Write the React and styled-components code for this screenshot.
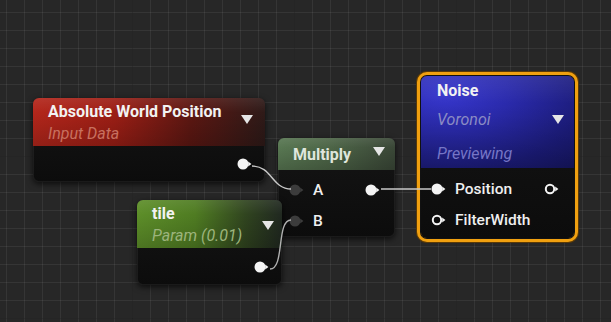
import styled, { createGlobalStyle } from 'styled-components';

const GlobalStyle = createGlobalStyle`
  html, body {
    margin: 0;
    padding: 0;
    background: #252525;
    overflow: hidden;
  }
`;

const Canvas = styled.div`
  position: relative;
  width: 611px;
  height: 322px;
  overflow: hidden;
  font-family: Roboto, 'Liberation Sans', sans-serif;
  background-color: #272727;
  background-image:
    linear-gradient(90deg, rgba(0, 0, 0, 0.3) 1px, transparent 1px),
    linear-gradient(0deg, rgba(0, 0, 0, 0.3) 1px, transparent 1px),
    linear-gradient(90deg, rgba(255, 255, 255, 0.065) 1px, transparent 1px),
    linear-gradient(0deg, rgba(255, 255, 255, 0.065) 1px, transparent 1px);
  background-size: 162px 162px, 162px 162px, 18px 18px, 18px 18px;
  background-position: 132px 0, 0 319px, 6px 0, 0 13px;
`;

const Node = styled.div`
  position: absolute;
  left: ${(p) => p.$left}px;
  top: ${(p) => p.$top}px;
  width: ${(p) => p.$width}px;
  height: ${(p) => p.$height}px;
  display: flex;
  flex-direction: column;
  border-radius: 6px;
  overflow: hidden;
  background: linear-gradient(180deg, #151515 0%, #0c0c0c 100%);
  box-shadow: ${(p) =>
    p.$selected
      ? '0 0 0 1px #111, 0 0 0 4px #f0a010, 0 0 0 5px #5a3a08'
      : '0 2px 6px rgba(0, 0, 0, 0.7), inset 0 0 0 1px rgba(255, 255, 255, 0.06)'};
`;

const headerBg = {
  red: 'linear-gradient(90deg, #b3261b 0%, #9c1e15 35%, #5c1712 68%, #2e1a18 100%)',
  sage: 'linear-gradient(90deg, #587752 0%, #4d6547 45%, #3a4737 100%)',
  green: 'linear-gradient(90deg, #5d8e29 0%, #4f7c22 40%, #30441f 75%, #202820 100%)',
  blue: 'radial-gradient(ellipse at 15% 20%, #3636cc 0%, #2a2aac 35%, #1c1c7c 75%, #161662 100%)',
};

const Header = styled.div`
  position: relative;
  height: ${(p) => p.$height}px;
  flex: none;
  display: flex;
  align-items: flex-start;
  justify-content: space-between;
  padding: ${(p) => p.$pad};
  box-sizing: border-box;
  background: ${(p) => headerBg[p.$tone]};
  &::after {
    content: '';
    position: absolute;
    inset: 0;
    background: linear-gradient(180deg, rgba(255, 255, 255, 0.08) 0%, transparent 30%, rgba(0, 0, 0, 0.18) 100%);
    pointer-events: none;
  }
`;

const TextCol = styled.div`
  display: flex;
  flex-direction: column;
  flex: 1;
  position: relative;
  z-index: 1;
`;

const HeadRow = styled.div`
  display: flex;
  align-items: center;
  justify-content: space-between;
  height: ${(p) => p.$h}px;
`;

const Title = styled.span`
  font-size: 16px;
  font-weight: 700;
  color: ${(p) => p.$color || '#f2f2f2'};
  white-space: nowrap;
`;

const Sub = styled.span`
  font-size: 16px;
  font-style: italic;
  color: ${(p) => p.$color};
  white-space: nowrap;
`;

const Caret = styled.span`
  width: 0;
  height: 0;
  margin-top: ${(p) => p.$top || 0}px;
  border-left: 6px solid transparent;
  border-right: 6px solid transparent;
  border-top: 9px solid #e6e6e6;
  flex: none;
  position: relative;
  z-index: 1;
`;

const Body = styled.div`
  flex: 1;
  display: flex;
  flex-direction: column;
  padding: ${(p) => p.$pad};
`;

const PinRow = styled.div`
  height: 31px;
  display: flex;
  align-items: center;
  justify-content: space-between;
  padding: 0 ${(p) => p.$right}px 0 ${(p) => p.$left}px;
`;

const PinLabel = styled.div`
  display: flex;
  align-items: center;
  gap: 8px;
  font-size: 15.5px;
  font-weight: 500;
  color: ${(p) => p.$color || '#efefef'};
`;

const OutOnly = styled.div`
  flex: 1;
  display: flex;
  align-items: center;
  justify-content: flex-end;
  padding-right: 12px;
`;

const Wires = styled.svg`
  position: absolute;
  inset: 0;
  pointer-events: none;
`;

const Pin = ({ kind = 'filled' }) => {
  const color = kind === 'dim' ? '#3c3c3c' : '#f4f4f4';
  return (
    <svg width="16" height="12" viewBox="0 0 16 12">
      {kind === 'hollow' ? (
        <circle cx="6" cy="6" r="4.2" fill="none" stroke={color} strokeWidth="2" />
      ) : (
        <circle cx="6" cy="6" r="5.5" fill={color} />
      )}
      <path d="M11.2 3.6 L14.4 6 L11.2 8.4 Z" fill={color} />
    </svg>
  );
};

const App = () => {
  return (
    <>
      <GlobalStyle />
      <Canvas>
        <Node $left={33} $top={98} $width={232} $height={84}>
          <Header $tone="red" $height={48} $pad="3px 12px 0 15px">
            <TextCol>
              <HeadRow $h={20}>
                <Title>Absolute World Position</Title>
              </HeadRow>
              <HeadRow $h={24}>
                <Sub $color="#c8705f">Input Data</Sub>
              </HeadRow>
            </TextCol>
            <Caret $top={14} />
          </Header>
          <OutOnly>
            <Pin />
          </OutOnly>
        </Node>

        <Node $left={278} $top={138} $width={117} $height={99}>
          <Header $tone="sage" $height={32} $pad="0 10px 0 15px">
            <TextCol>
              <HeadRow $h={32}>
                <Title $color="#dfe6dc">Multiply</Title>
              </HeadRow>
            </TextCol>
            <Caret $top={9} />
          </Header>
          <Body $pad="4px 0 0 0">
            <PinRow $left={11} $right={14}>
              <PinLabel>
                <Pin kind="dim" />A
              </PinLabel>
              <Pin />
            </PinRow>
            <PinRow $left={11} $right={14}>
              <PinLabel>
                <Pin kind="dim" />B
              </PinLabel>
            </PinRow>
          </Body>
        </Node>

        <Node $left={137} $top={200} $width={145} $height={85}>
          <Header $tone="green" $height={48} $pad="3px 8px 0 15px">
            <TextCol>
              <HeadRow $h={20}>
                <Title>tile</Title>
              </HeadRow>
              <HeadRow $h={24}>
                <Sub $color="#9cb47c">Param (0.01)</Sub>
              </HeadRow>
            </TextCol>
            <Caret $top={18} />
          </Header>
          <OutOnly>
            <Pin />
          </OutOnly>
        </Node>

        <Node $left={421} $top={76} $width={153} $height={162} $selected>
          <Header $tone="blue" $height={92} $pad="5px 10px 0 16px">
            <TextCol>
              <HeadRow $h={18}>
                <Title>Noise</Title>
              </HeadRow>
              <HeadRow $h={40}>
                <Sub $color="#8b8bc4">Voronoi</Sub>
                <Caret />
              </HeadRow>
              <HeadRow $h={28}>
                <Sub $color="#7676c6">Previewing</Sub>
              </HeadRow>
            </TextCol>
          </Header>
          <Body $pad="5px 0 0 0">
            <PinRow $left={10} $right={14}>
              <PinLabel>
                <Pin />
                Position
              </PinLabel>
              <Pin kind="hollow" />
            </PinRow>
            <PinRow $left={10} $right={14}>
              <PinLabel>
                <Pin kind="hollow" />
                FilterWidth
              </PinLabel>
            </PinRow>
          </Body>
        </Node>

        <Wires width="611" height="322" viewBox="0 0 611 322">
          <path d="M252 166 C 272 166, 272 189, 291 189" stroke="#c8c8c8" strokeWidth="1.4" fill="none" />
          <path d="M270 269 C 285 269, 276 220, 291 220" stroke="#b0b0b0" strokeWidth="1.4" fill="none" />
          <path d="M381 189 L 431 189" stroke="#c8c8c8" strokeWidth="1.4" fill="none" />
        </Wires>
      </Canvas>
    </>
  );
};

export default App;
